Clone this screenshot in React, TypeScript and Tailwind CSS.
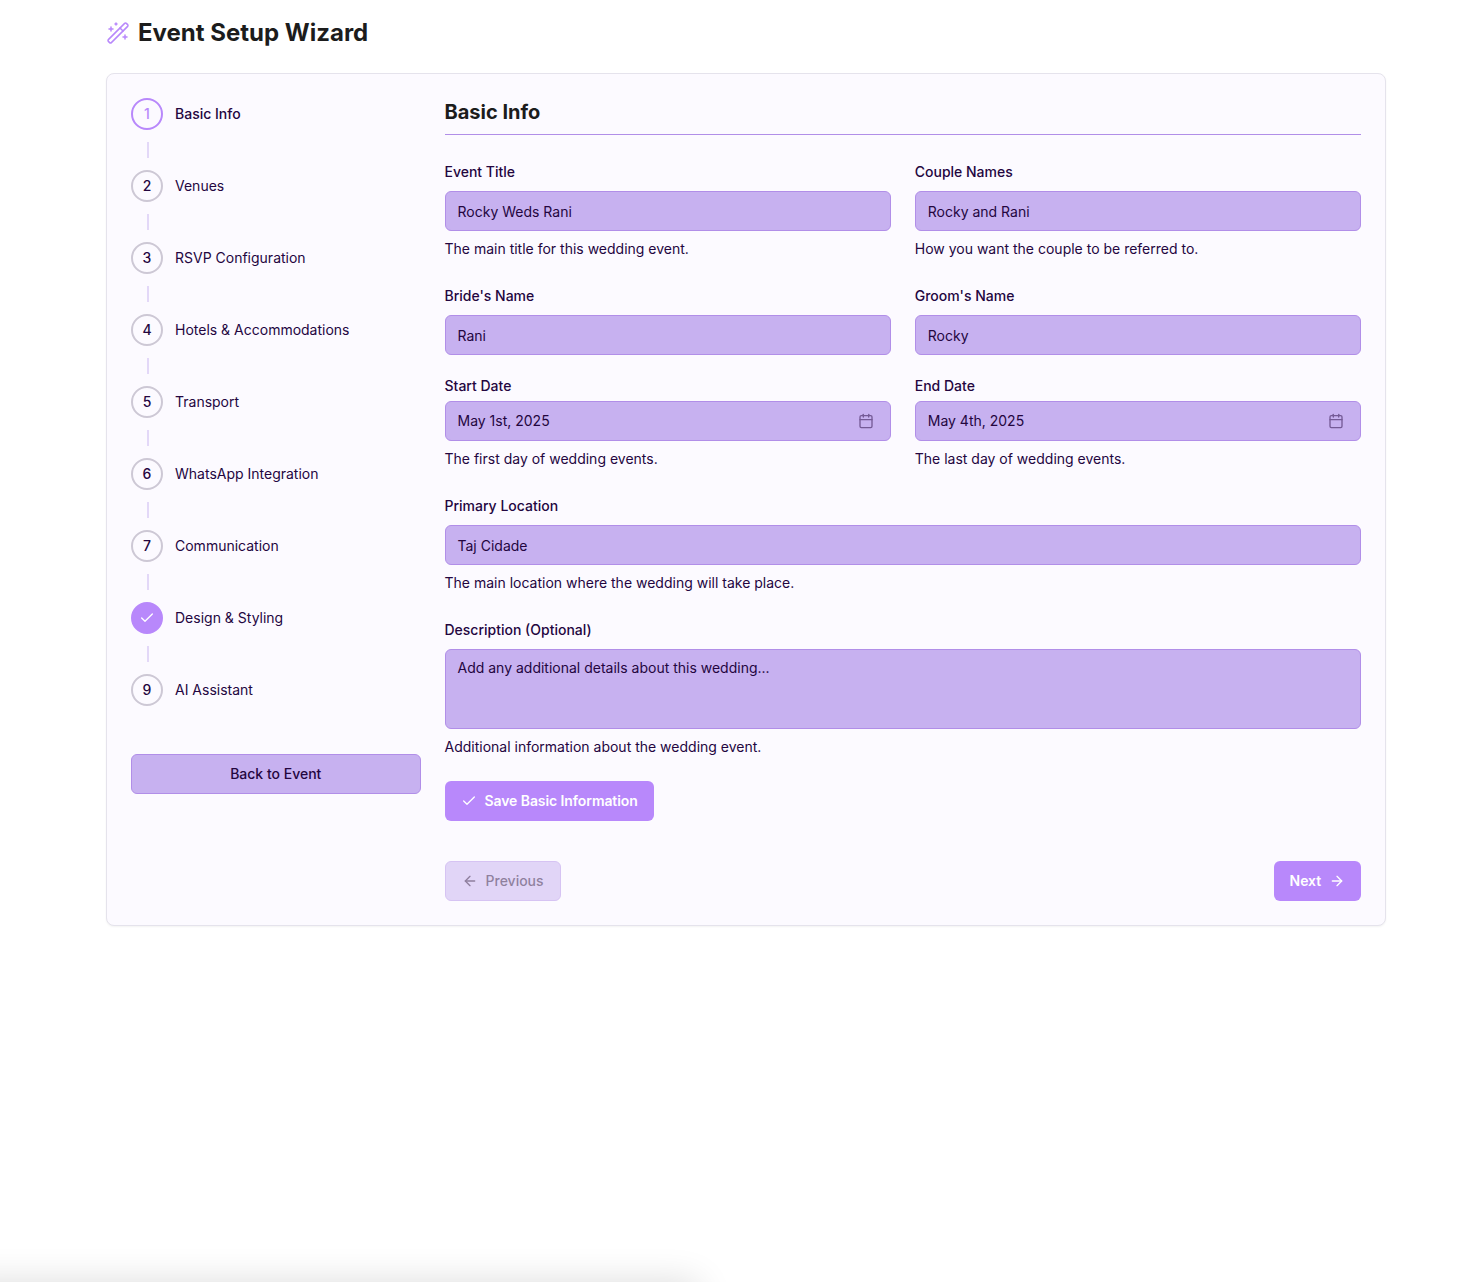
import React from "react";
import { ArrowLeft, ArrowRight, Calendar, Check, WandSparkles } from "lucide-react";

const steps = [
  "Basic Info",
  "Venues",
  "RSVP Configuration",
  "Hotels & Accommodations",
  "Transport",
  "WhatsApp Integration",
  "Communication",
  "Design & Styling",
  "AI Assistant",
];

const CURRENT = 0;
const COMPLETED = 7;

function StepMarker({ index }: { index: number }) {
  const base = "flex size-8 shrink-0 items-center justify-center rounded-full border-2 text-sm font-medium";
  if (index === COMPLETED) {
    return (
      <span className={`${base} border-[#b888fb] bg-[#b888fb] text-white`}>
        <Check size={16} />
      </span>
    );
  }
  if (index === CURRENT) {
    return <span className={`${base} border-[#b888fb] text-[#b888fb]`}>{index + 1}</span>;
  }
  return <span className={`${base} border-[#cdc8d5]`}>{index + 1}</span>;
}

function Stepper() {
  return (
    <ol>
      {steps.map((name, i) => (
        <li key={name}>
          <div className="flex items-center gap-3">
            <StepMarker index={i} />
            <span className={i === CURRENT ? "text-sm font-medium" : "text-sm"}>{name}</span>
          </div>
          {i < steps.length - 1 && <div className="my-3 ml-4 h-4 w-0.5 bg-[#e3d8f8]" />}
        </li>
      ))}
    </ol>
  );
}

const box = "w-full rounded-md border border-[#b18ee8] bg-[#c7b1f0] px-3 text-sm";

function Help({ children }: { children?: React.ReactNode }) {
  return children ? <p className="mt-2 text-sm">{children}</p> : null;
}

function Field({ label, value, help }: { label: string; value: string; help?: string }) {
  return (
    <div>
      <label className="block h-8 pt-px text-sm leading-6 font-medium">{label}</label>
      <div className={`${box} flex h-10 items-center pt-0.5`}>{value}</div>
      <Help>{help}</Help>
    </div>
  );
}

function DateField({ label, value, help }: { label: string; value: string; help: string }) {
  return (
    <div>
      <label className="mb-2 block text-sm leading-none font-medium">{label}</label>
      <div className={`${box} flex h-10 items-center justify-between pr-4`}>
        {value}
        <Calendar size={16} className="opacity-50" />
      </div>
      <Help>{help}</Help>
    </div>
  );
}

const button = "flex h-10 items-center justify-center rounded-md px-4 text-sm";
const primary = "gap-2 bg-[#b888fb] font-semibold tracking-[-0.085px] text-white";
const outline = "border border-[#b18ee8] bg-[#c7b1f0] font-medium";

export default function App() {
  return (
    <div className="relative h-[1282px] w-[1480px] overflow-hidden bg-white pt-4 pl-[106px] font-['Inter',sans-serif] text-[#24063f]">
      <header className="mb-6 flex h-[33px] items-center gap-2">
        <WandSparkles size={24} strokeWidth={1.5} className="text-[#b888fb]" />
        <h1 className="text-2xl font-bold text-[#1c1c1c]">Event Setup Wizard</h1>
      </header>

      <div className="grid w-[1280px] grid-cols-4 gap-6 rounded-lg border border-[#e5e3ec] bg-[#fcfaff] p-6 shadow-xs">
        <aside>
          <Stepper />
          <button className={`${button} ${outline} mt-12 w-full`}>Back to Event</button>
        </aside>

        <main className="col-span-3">
          <h2 className="mb-6 border-b border-[#b18ee8] pb-2 text-xl font-bold text-[#1c1c1c]">Basic Info</h2>
          <div className="grid grid-cols-2 gap-6">
            <Field label="Event Title" value="Rocky Weds Rani" help="The main title for this wedding event." />
            <Field label="Couple Names" value="Rocky and Rani" help="How you want the couple to be referred to." />
            <Field label="Bride's Name" value="Rani" />
            <Field label="Groom's Name" value="Rocky" />
            <DateField label="Start Date" value="May 1st, 2025" help="The first day of wedding events." />
            <DateField label="End Date" value="May 4th, 2025" help="The last day of wedding events." />
            <div className="col-span-2">
              <Field
                label="Primary Location"
                value="Taj Cidade"
                help="The main location where the wedding will take place."
              />
            </div>
            <div className="col-span-2">
              <label className="block h-8 pt-px text-sm leading-6 font-medium">Description (Optional)</label>
              <div className={`${box} h-20 py-2`}>Add any additional details about this wedding...</div>
              <Help>Additional information about the wedding event.</Help>
            </div>
          </div>

          <button className={`${button} ${primary} mt-6`}>
            <Check size={16} />
            Save Basic Information
          </button>

          <div className="mt-10 flex justify-between">
            <button disabled className={`${button} ${outline} gap-2 opacity-50`}>
              <ArrowLeft size={16} />
              Previous
            </button>
            <button className={`${button} ${primary}`}>
              Next
              <ArrowRight size={16} />
            </button>
          </div>
        </main>
      </div>

      <div className="absolute top-full -left-10 h-20 w-[738px] shadow-[0_0_36px_rgba(0,0,0,0.14)]" />
    </div>
  );
}
